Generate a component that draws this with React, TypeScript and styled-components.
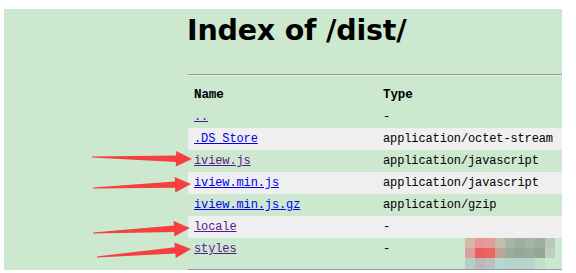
import React, { FC } from "react"
import styled, { createGlobalStyle } from "styled-components"

const GlobalStyle = createGlobalStyle`
    html, body {
        margin: 0;
        padding: 0;
        background: #ffffff;
    }
    #root {
        width: 576px;
        height: 273px;
    }
`

const StyledScreen = styled.div`
    position: relative;
    width: 576px;
    height: 273px;
    padding: 9px 14px 0 4px;
    box-sizing: border-box;
    overflow: hidden;
`

const StyledPage = styled.div`
    height: 261px;
    background: #cce8cf;
    padding: 6px 0 0 184px;
    box-sizing: border-box;
    display: flex;
    flex-direction: column;
`

const StyledTitle = styled.h1`
    margin: 0 0 0 -1px;
    font-family: "DejaVu Sans", Verdana, sans-serif;
    font-weight: bold;
    font-size: 28.5px;
    line-height: 32px;
    letter-spacing: -0.2px;
    color: #000;
`

const StyledRule: FC<{ $gap: number }> = styled.div<{ $gap: number }>`
    margin-top: ${props => props.$gap}px;
    height: 1px;
    border-top: 1px solid #9a9a9a;
    background: #e4efe5;
`

const StyledTable = styled.div`
    margin-top: 8px;
    display: grid;
    grid-template-columns: 189px 1fr;
    grid-auto-rows: 22px;
    font-family: "Liberation Mono", "Courier New", monospace;
    font-size: 12px;
    letter-spacing: -0.12px;
    color: #000;
`

const StyledCell = styled.div<{ $shade: boolean; $head?: boolean }>`
    display: flex;
    align-items: center;
    padding: 1px 6px 0;
    background: ${props => (props.$shade ? "#efefef" : "transparent")};
    font-weight: ${props => (props.$head ? "bold" : "normal")};
    font-size: ${props => (props.$head ? "12.6px" : "12px")};
    white-space: nowrap;
`

const StyledLink = styled.a<{ $visited: boolean }>`
    color: ${props => (props.$visited ? "#551a8b" : "#0000ee")};
    text-decoration: underline;
    text-underline-offset: 1px;
`

const StyledOverlay = styled.svg`
    position: absolute;
    left: 0;
    top: 0;
    pointer-events: none;
`

const StyledMosaic = styled.div`
    position: absolute;
    left: 465px;
    top: 238px;
    display: grid;
    grid-template-columns: repeat(9, 10px);
    grid-template-rows: 10px 10px 11px;
`

const StyledTile = styled.div<{ $color: string }>`
    background: ${props => props.$color};
`

const rows = [
    { name: "..", type: "-", visited: true },
    { name: ".DS Store", type: "application/octet-stream", visited: false },
    { name: "iview.js", type: "application/javascript", visited: true },
    { name: "iview.min.js", type: "application/javascript", visited: false },
    { name: "iview.min.js.gz", type: "application/gzip", visited: false },
    { name: "locale", type: "-", visited: true },
    { name: "styles", type: "-", visited: true },
]

const arrows: [number, number, number, number][] = [
    [92, 157, 192, 159],
    [93, 188, 191, 184],
    [93, 233, 190, 228],
    [97, 257, 191, 249],
]

// tapered shaft + triangular head, from tail to tip
const arrowPoints = ([x0, y0, x1, y1]: [number, number, number, number]) => {
    const dx = x1 - x0
    const dy = y1 - y0
    const len = Math.hypot(dx, dy)
    const ux = dx / len
    const uy = dy / len
    const nx = -uy
    const ny = ux
    const bx = x1 - ux * 16
    const by = y1 - uy * 16
    const pts = [
        [x0 + nx * 0.6, y0 + ny * 0.6],
        [bx + nx * 3.2, by + ny * 3.2],
        [bx + nx * 7.8, by + ny * 7.8],
        [x1, y1],
        [bx - nx * 7.8, by - ny * 7.8],
        [bx - nx * 3.2, by - ny * 3.2],
        [x0 - nx * 0.6, y0 - ny * 0.6],
    ]
    return pts.map(p => `${p[0].toFixed(1)},${p[1].toFixed(1)}`).join(" ")
}

const mosaic = [
    "#d6b8a9", "#e69694", "#e49c9a", "#c6bead", "#a5b7a5", "#9eb19e", "#a5b6a4", "#9faf9e", "#b8c8b7",
    "#dd9e9c", "#ef5c5c", "#ec6462", "#bfa595", "#99ad99", "#94a894", "#99ac98", "#94a793", "#bfcebe",
    "#b6cfcd", "#c0b6b5", "#bfbfbe", "#b6d6ce", "#b5d4cc", "#b6d5cd", "#b5d4cc", "#c2e0ca", "#cce8cf",
]

export default function App() {
    return (
        <StyledScreen>
            <GlobalStyle />
            <StyledPage>
                <StyledTitle>Index of /dist/</StyledTitle>
                <StyledRule $gap={27} />
                <StyledTable>
                    <StyledCell $shade={false} $head>Name</StyledCell>
                    <StyledCell $shade={false} $head>Type</StyledCell>
                    {rows.map((row, i) => (
                        <React.Fragment key={row.name}>
                            <StyledCell $shade={i % 2 === 1}>
                                <StyledLink href="#" $visited={row.visited}>{row.name}</StyledLink>
                            </StyledCell>
                            <StyledCell $shade={i % 2 === 1}>{row.type}</StyledCell>
                        </React.Fragment>
                    ))}
                </StyledTable>
                <StyledRule $gap={9} />
            </StyledPage>
            <StyledMosaic>
                {mosaic.map((c, i) => <StyledTile key={i} $color={c} />)}
            </StyledMosaic>
            <StyledOverlay width="576" height="273" viewBox="0 0 576 273">
                {arrows.map((a, i) => (
                    <polygon key={i} points={arrowPoints(a)} fill="#f63f3f" />
                ))}
            </StyledOverlay>
        </StyledScreen>
    )
}
